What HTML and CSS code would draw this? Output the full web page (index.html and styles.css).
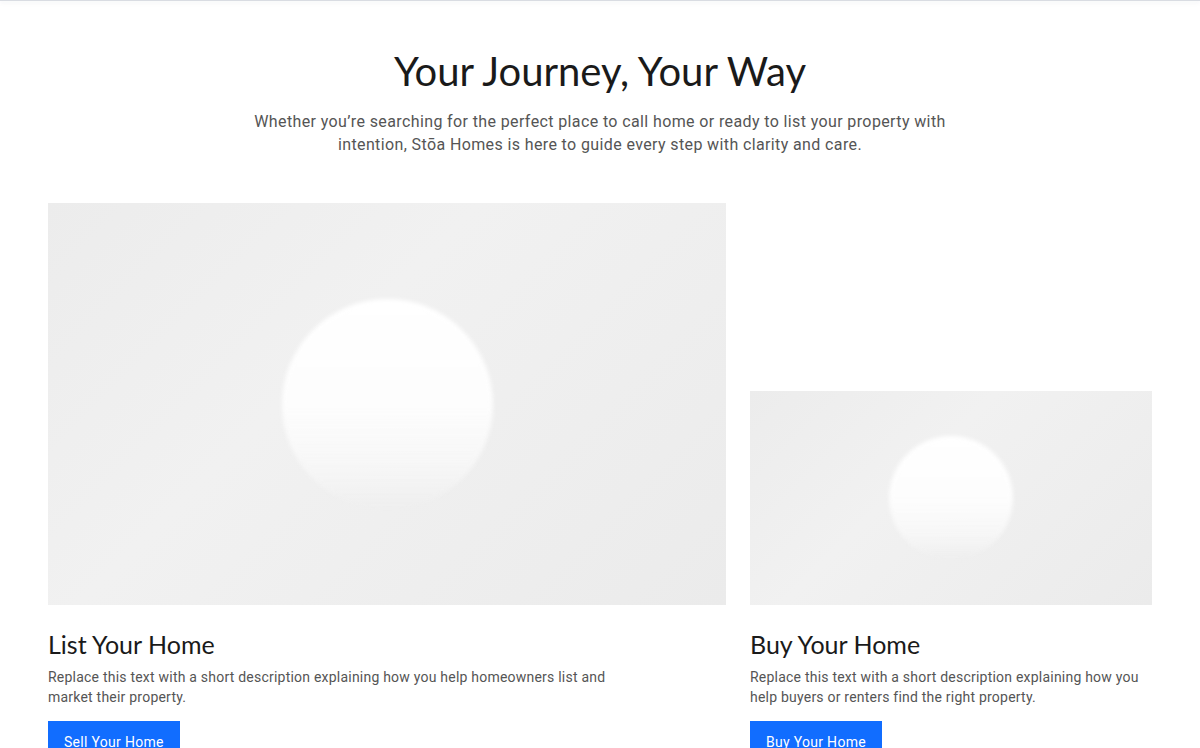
FILE: index.html
```html
<!DOCTYPE html>
<html lang="en">
<head>
<meta charset="utf-8">
<title>Your Journey, Your Way</title>
<link rel="stylesheet" href="styles.css">
</head>
<body>
<div class="topbar"></div>
<section class="journey">
  <header class="intro">
    <h1 class="intro-title">Your Journey, Your Way</h1>
    <p class="intro-text">Whether you’re searching for the perfect place to call home or ready to list your property with intention, Stōa Homes is here to guide every step with clarity and care.</p>
  </header>
  <div class="cards">
    <div class="media media-large"><div class="orb orb-large"></div></div>
    <div class="media media-small"><div class="orb orb-small"></div></div>
    <div class="card-body">
      <h2 class="card-title">List Your Home</h2>
      <p class="card-text card-text-narrow">Replace this text with a short description explaining how you help homeowners list and market their property.</p>
      <a class="btn" href="#">Sell Your Home</a>
    </div>
    <div class="card-body">
      <h2 class="card-title">Buy Your Home</h2>
      <p class="card-text">Replace this text with a short description explaining how you help buyers or renters find the right property.</p>
      <a class="btn" href="#">Buy Your Home</a>
    </div>
  </div>
</section>
</body>
</html>
```
FILE: styles.css
```css
html, body {
  margin: 0;
  padding: 0;
  background: #fff;
}
body {
  font-family: "Roboto", "Liberation Sans", sans-serif;
  color: #222;
  overflow: hidden;
}
.topbar {
  height: 1px;
  background: #d9dce2;
  box-shadow: 0 1px 5px rgba(40, 50, 80, 0.15);
}
.journey {
  padding: 0 48px;
}
.intro {
  text-align: center;
  padding-top: 44px;
}
.intro-title {
  margin: 0;
  font-family: "Lato", sans-serif;
  font-weight: 400;
  font-size: 40px;
  line-height: 52px;
  color: #1a1a1a;
}
.intro-text {
  margin: 13px auto 0;
  max-width: 720px;
  font-size: 16px;
  line-height: 23px;
  letter-spacing: 0.38px;
  color: #555;
}
.cards {
  display: grid;
  grid-template-columns: 678px 402px;
  column-gap: 24px;
  margin-top: 47px;
}
.media {
  align-self: end;
  display: flex;
  align-items: center;
  justify-content: center;
  background: linear-gradient(135deg, #ececec 0%, #f1f1f1 40%, #eeeeee 70%, #ebebeb 100%);
  overflow: hidden;
}
.media-large { height: 402px; }
.media-small { height: 214px; }
.orb {
  border-radius: 50%;
  background: linear-gradient(180deg, #ffffff 0%, #fdfdfd 50%, rgba(250,250,250,0.7) 78%, rgba(245,245,245,0) 100%);
  filter: blur(2px);
}
.orb-large { width: 211px; height: 211px; }
.orb-small { width: 124px; height: 124px; }
.card-body {
  padding-top: 23px;
}
.card-title {
  margin: 0;
  font-family: "Lato", sans-serif;
  font-weight: 400;
  font-size: 25px;
  line-height: 32px;
  color: #1a1a1a;
}
.card-text {
  margin: 7px 0 0;
  font-size: 14px;
  line-height: 20px;
  letter-spacing: 0.22px;
  color: #555;
}
.card-text-narrow { max-width: 600px; }
.btn {
  display: inline-block;
  margin-top: 14px;
  padding: 0 16px;
  height: 40px;
  line-height: 42px;
  background: #116dff;
  color: #fff;
  font-size: 14px;
  letter-spacing: 0.3px;
  text-decoration: none;
}
```
